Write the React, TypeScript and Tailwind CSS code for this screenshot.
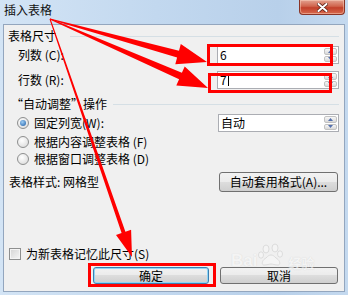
import React from "react";

function arrowPts(
  x0: number, y0: number, x1: number, y1: number,
  w0: number, w1: number, hl: number, hw: number
) {
  const dx = x1 - x0, dy = y1 - y0, L = Math.hypot(dx, dy);
  const ux = dx / L, uy = dy / L, nx = -uy, ny = ux;
  const bx = x1 - ux * hl, by = y1 - uy * hl;
  const p = [
    [x0 + (nx * w0) / 2, y0 + (ny * w0) / 2],
    [bx + (nx * w1) / 2, by + (ny * w1) / 2],
    [bx + (nx * hw) / 2, by + (ny * hw) / 2],
    [x1, y1],
    [bx - (nx * hw) / 2, by - (ny * hw) / 2],
    [bx - (nx * w1) / 2, by - (ny * w1) / 2],
    [x0 - (nx * w0) / 2, y0 - (ny * w0) / 2],
  ];
  return p.map((q) => q.map((v) => v.toFixed(1)).join(",")).join(" ");
}

function Spin() {
  return (
    <div className="flex flex-col w-[14px] self-stretch py-px pr-px gap-px">
      <div className="flex-1 flex items-center justify-center rounded-[2px] bg-[linear-gradient(#f7f7f7,#d8d8d8)] border border-[#c2c2c2]">
        <svg width="5" height="3" viewBox="0 0 5 3">
          <path d="M0 3L2.5 0L5 3Z" fill="#5470ad" />
        </svg>
      </div>
      <div className="flex-1 flex items-center justify-center rounded-[2px] bg-[linear-gradient(#f7f7f7,#d8d8d8)] border border-[#c2c2c2]">
        <svg width="5" height="3" viewBox="0 0 5 3">
          <path d="M0 0L2.5 3L5 0Z" fill="#5470ad" />
        </svg>
      </div>
    </div>
  );
}

function SpinInput({ value, caret, w }: { value: string; caret?: boolean; w: string }) {
  return (
    <div className={`ml-auto mr-[5px] ${w} h-[18px] border border-[#abadb3] bg-white flex items-center`}>
      <span className="pl-[2px] leading-[14px] flex-1 flex items-center">
        {value}
        {caret && <span className="inline-block w-px h-[11px] bg-black ml-px" />}
      </span>
      <Spin />
    </div>
  );
}

function Radio({ checked }: { checked?: boolean }) {
  return (
    <div className="w-[12px] h-[12px] rounded-full border border-[#8e8f8f] bg-[radial-gradient(circle_at_40%_35%,#ffffff,#d6d6d6)] flex items-center justify-center shrink-0">
      {checked && (
        <div className="w-[6px] h-[6px] rounded-full bg-[radial-gradient(circle_at_40%_35%,#9dcdf5,#1b5aa3)]" />
      )}
    </div>
  );
}

function Separator({ ml }: { ml: string }) {
  return <div className={`flex-1 h-px bg-[#d5dfe5] ${ml} mr-[5px]`} />;
}

const btn =
  "h-full flex items-center justify-center rounded-[3px] border bg-[linear-gradient(#f2f2f2,#ebebeb_50%,#dddddd_50%,#cfcfcf)] leading-[14px]";

export default function App() {
  return (
    <div className="relative w-[348px] h-[295px] overflow-hidden bg-[linear-gradient(90deg,#d3e4f5,#c2d8ef_45%,#b8d0ea_80%,#c4d9ef)] [font-family:'Noto_Sans_CJK_SC','Noto_Sans',sans-serif] text-[12px] text-black">
      {/* title bar */}
      <div className="h-[24px] flex items-start">
        <span className="ml-[4px] mt-[3px] leading-[14px] text-[#111]">插入表格</span>
        <div className="ml-auto mr-[3px] w-[46px] h-[15px] rounded-b-[4px] border border-t-0 border-[#8a3426] bg-[linear-gradient(#e3a290,#d0644c_45%,#c2402a_55%,#d86a4e)] flex items-center justify-center shadow-[inset_0_0_0_1px_rgba(255,220,200,0.45)]">
          <svg width="11" height="9" viewBox="0 0 11 9">
            <path d="M1.5 1L9.5 8M9.5 1L1.5 8" stroke="#5a2016" strokeWidth="3.6" strokeLinecap="round" />
            <path d="M1.5 1L9.5 8M9.5 1L1.5 8" stroke="#ffffff" strokeWidth="2" strokeLinecap="round" />
          </svg>
        </div>
      </div>

      {/* client area */}
      <div className="mx-[3px] h-[268px] bg-[#f0f0f0] border border-[#93a6be] flex flex-col">
        <div className="mt-[4px] h-[14px] flex items-center pl-[4px]">
          <span className="leading-[14px]">表格尺寸</span>
          <Separator ml="ml-[14px]" />
        </div>
        <div className="mt-[3px] h-[18px] flex items-center pl-[14px]">
          <span className="leading-[14px]">列数 (C):</span>
          <SpinInput value="6" w="w-[122px]" />
        </div>
        <div className="mt-[7px] h-[18px] flex items-center pl-[14px]">
          <span className="leading-[14px]">行数 (R):</span>
          <SpinInput value="7" caret w="w-[122px]" />
        </div>

        <div className="mt-[8px] h-[14px] flex items-center pl-[7px]">
          <span className="leading-[14px]">“自动调整”操作</span>
          <Separator ml="ml-[6px]" />
        </div>
        <div className="mt-[3px] h-[18px] flex items-center pl-[13px]">
          <Radio checked />
          <span className="ml-[5px] leading-[14px]">固定列宽(W):</span>
          <SpinInput value="自动" w="w-[121px]" />
        </div>
        <div className="mt-[1px] h-[17px] flex items-center pl-[13px]">
          <Radio />
          <span className="ml-[5px] leading-[14px]">根据内容调整表格 (F)</span>
        </div>
        <div className="h-[17px] flex items-center pl-[13px]">
          <Radio />
          <span className="ml-[5px] leading-[14px]">根据窗口调整表格 (D)</span>
        </div>

        <div className="mt-[5px] h-[20px] flex items-center pl-[5px]">
          <span className="leading-[14px]">表格样式: 网格型</span>
          <div className={`${btn} ml-auto mr-[6px] w-[119px] border-[#707070]`}>自动套用格式(A)...</div>
        </div>

        <div className="flex-1" />

        <div className="h-[14px] flex items-center pl-[5px]">
          <div className="w-[12px] h-[12px] border border-[#8e8f8f] bg-[linear-gradient(135deg,#d4d4d4,#f6f6f6)] shadow-[inset_0_0_0_1px_#f4f4f4] shrink-0" />
          <span className="ml-[5px] leading-[14px]">为新表格记忆此尺寸(S)</span>
        </div>

        <div className="mt-[6px] h-[17px] flex justify-end gap-[11px] mr-[6px]">
          <div className={`${btn} w-[116px] border-[#3c7fb1] shadow-[inset_0_0_0_1px_#8fd6f7]`}>确定</div>
          <div className={`${btn} w-[118px] border-[#707070]`}>取消</div>
        </div>
        <div className="h-[7px]" />
      </div>

      {/* faint watermark */}
      <div className="absolute left-[231px] top-[243px] flex items-end pointer-events-none text-[#f7f7f7] opacity-70 [text-shadow:0_0_1px_#c8c8c8]">
        <span className="text-[17px] font-bold leading-[20px] [font-family:'Liberation_Sans',sans-serif]">Bai</span>
        <svg width="28" height="26" viewBox="0 0 28 26" className="mb-[2px]">
          <g fill="#f7f7f7" stroke="#cccccc" strokeWidth="0.8">
            <ellipse cx="9" cy="6" rx="3" ry="4" />
            <ellipse cx="18" cy="5" rx="3" ry="4" />
            <ellipse cx="4" cy="12" rx="2.5" ry="3.2" />
            <ellipse cx="23" cy="11" rx="2.5" ry="3.2" />
            <path d="M7 22C4 22 5 17 9 15C11 13 12 12 14 12C16 12 17 13 19 15C23 17 24 22 21 22C18 22 16 21 14 21C12 21 10 22 7 22Z" />
          </g>
        </svg>
        <span className="ml-[3px] text-[13px] leading-[16px] font-bold">经验</span>
      </div>

      {/* red annotations */}
      <svg className="absolute left-0 top-0 pointer-events-none" width="348" height="295" viewBox="0 0 348 295">
        <polygon points={arrowPts(50, 19, 207, 62, 1, 7, 30, 21)} fill="#ff0000" />
        <polygon points={arrowPts(50, 19, 208, 88, 1, 7, 30, 21)} fill="#ff0000" />
        <polygon points={arrowPts(50, 19, 132, 257, 1, 4, 26, 16)} fill="#ff0000" />
        <rect x="208.5" y="45.5" width="123" height="19" fill="none" stroke="#ff0000" strokeWidth="3" />
        <rect x="209.5" y="74.5" width="121" height="17" fill="none" stroke="#ff0000" strokeWidth="3" />
        <rect x="89.5" y="264.5" width="125" height="21" fill="none" stroke="#ff0000" strokeWidth="3" />
      </svg>
    </div>
  );
}
